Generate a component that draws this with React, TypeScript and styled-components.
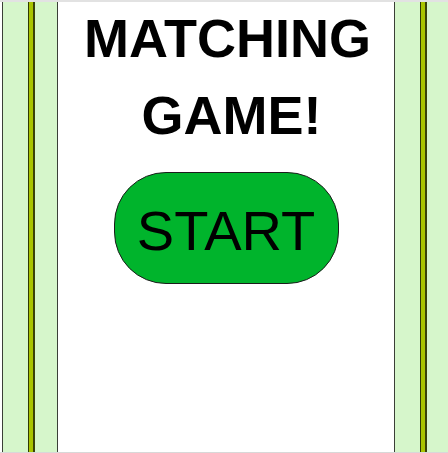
import React from "react";
import styled, { createGlobalStyle } from "styled-components";

const Global = createGlobalStyle`
  html, body { margin: 0; padding: 0; background: #ffffff; }
  #root { width: 448px; height: 453px; }
`;

const Frame = styled.div`
  box-sizing: border-box;
  width: 448px;
  height: 453px;
  border-top: 2px solid #e2e2e2;
  border-bottom: 1px solid #d8d8d8;
  display: flex;
  align-items: stretch;
  overflow: hidden;
`;

const SidePanel = styled.div<{ $side: "left" | "right" }>`
  box-sizing: border-box;
  flex: 0 0 ${(p) => (p.$side === "left" ? "56px" : "54px")};
  margin-left: ${(p) => (p.$side === "left" ? "2px" : "0")};
  background: #d6f6cb;
  border-left: 1px solid #3b3f37;
  border-right: ${(p) => (p.$side === "left" ? "1px solid #3b3f37" : "none")};
  display: flex;
  padding-left: 25px;
`;

const Pole = styled.div`
  box-sizing: border-box;
  width: 7px;
  background: #a9c400;
  border-left: 1px solid #2f3a05;
  border-right: 2px solid #3a4208;
`;

const Center = styled.main`
  flex: 1;
  display: flex;
  flex-direction: column;
  align-items: center;
`;

const Title = styled.h1`
  margin: -2px 0 0 0;
  font-family: "Liberation Sans", Arial, sans-serif;
  font-weight: 700;
  font-size: 54px;
  line-height: 77px;
  text-align: center;
  color: #000;
  padding-left: 3px;
`;

const TitleLine = styled.span<{ $shift?: number }>`
  display: block;
  padding-left: ${(p) => p.$shift ?? 0}px;
`;

const StartButton = styled.button`
  margin-top: 18px;
  width: 225px;
  height: 112px;
  border: 1px solid #1c1c1c;
  border-radius: 52px;
  background: #00b42c;
  color: #000;
  font-family: "Liberation Sans", Arial, sans-serif;
  font-weight: 400;
  font-size: 56px;
  padding: 5px 0 0 0;
  display: flex;
  align-items: center;
  justify-content: center;
  cursor: pointer;
`;

export default function App() {
  return (
    <>
      <Global />
      <Frame>
        <SidePanel $side="left">
          <Pole />
        </SidePanel>
        <Center>
          <Title>
            <TitleLine>MATCHING</TitleLine>
            <TitleLine $shift={8}>GAME!</TitleLine>
          </Title>
          <StartButton>START</StartButton>
        </Center>
        <SidePanel $side="right">
          <Pole />
        </SidePanel>
      </Frame>
    </>
  );
}
